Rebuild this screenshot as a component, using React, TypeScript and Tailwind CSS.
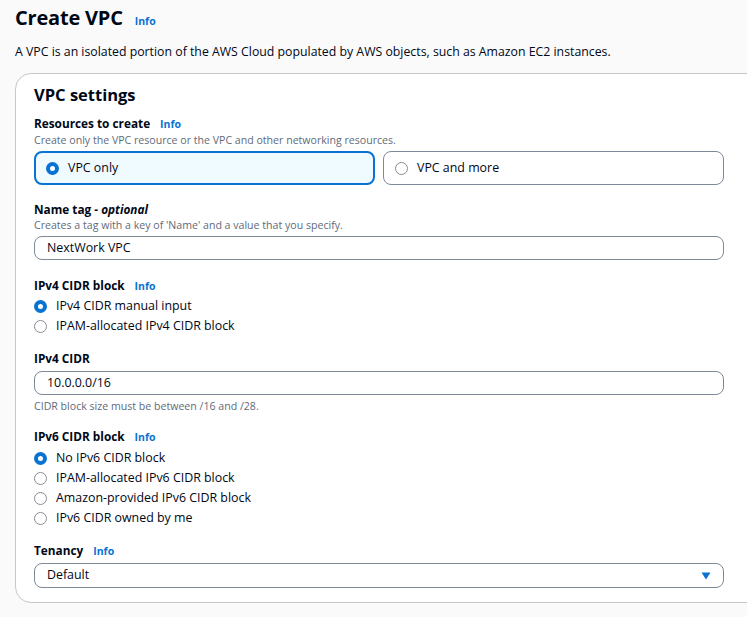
import React from "react";

const font = { fontFamily: '"Open Sans", "Noto Sans", Arial, sans-serif' };

function Info() {
  return <span className="ml-[10px] text-[10.5px] font-bold text-[#0972d3]">Info</span>;
}

function Radio({ checked }: { checked?: boolean }) {
  return checked ? (
    <span className="inline-block h-[13px] w-[13px] shrink-0 rounded-full border-[4px] border-[#0972d3] bg-white" />
  ) : (
    <span className="inline-block h-[13px] w-[13px] shrink-0 rounded-full border border-[#8c8c94] bg-white" />
  );
}

function RadioRow({ label, checked }: { label: string; checked?: boolean }) {
  return (
    <div className="flex h-[20px] items-center gap-[9px] text-[12.4px] text-[#000716]">
      <Radio checked={checked} />
      <span>{label}</span>
    </div>
  );
}

function Label({ children }: { children: React.ReactNode }) {
  return <div className="flex items-baseline text-[11.8px] font-bold leading-[18px] text-[#000716]">{children}</div>;
}

function Help({ children }: { children: React.ReactNode }) {
  return <div className="text-[10.6px] leading-[15px] text-[#5f6b7a]">{children}</div>;
}

function Input({ value }: { value: string }) {
  return (
    <div className="flex h-[24px] items-center rounded-[8px] border border-[#7d8998] bg-white px-[12px] text-[12.4px] text-[#000716]">
      {value}
    </div>
  );
}

export default function App() {
  return (
    <div className="h-[617px] w-[747px] overflow-hidden bg-[#fafafb]" style={font}>
      <div className="w-[790px] pl-[15px]">
        <div className="flex items-baseline pt-[2px]">
          <h1 className="text-[20px] font-bold leading-[32px] tracking-[-0.2px] text-[#000716]">Create VPC</h1>
          <span className="ml-[12px] text-[10.5px] font-bold text-[#0972d3]">Info</span>
        </div>
        <p className="mt-[8px] text-[12.3px] leading-[20px] text-[#000716]">
          A VPC is an isolated portion of the AWS Cloud populated by AWS objects, such as Amazon EC2 instances.
        </p>

        <div className="mt-[11px] rounded-[16px] border border-[#c6c6cd] bg-white pb-[14px] pl-[18px] pr-[18px] pt-[9px]">
          <h2 className="text-[16.5px] font-bold leading-[24px] text-[#000716]">VPC settings</h2>

          <div className="w-[690px]">
            <div className="mt-[7px]">
              <Label>
                Resources to create <Info />
              </Label>
              <Help>Create only the VPC resource or the VPC and other networking resources.</Help>
              <div className="mt-[3px] grid grid-cols-2 gap-[8px]">
                <div className="flex h-[34px] items-center gap-[9px] rounded-[8px] border-2 border-[#0972d3] bg-[#f0fbff] px-[10px] text-[12.4px] text-[#000716]">
                  <Radio checked />
                  <span>VPC only</span>
                </div>
                <div className="flex h-[34px] items-center gap-[9px] rounded-[8px] border border-[#7d8998] bg-white px-[11px] text-[12.4px] text-[#000716]">
                  <Radio />
                  <span>VPC and more</span>
                </div>
              </div>
            </div>

            <div className="mt-[15px]">
              <Label>
                Name tag -&nbsp;<i>optional</i>
              </Label>
              <Help>Creates a tag with a key of 'Name' and a value that you specify.</Help>
              <div className="mt-[3px]">
                <Input value="NextWork VPC" />
              </div>
            </div>

            <div className="mt-[16px]">
              <Label>
                IPv4 CIDR block <Info />
              </Label>
              <div className="mt-[1px]">
                <RadioRow label="IPv4 CIDR manual input" checked />
                <RadioRow label="IPAM-allocated IPv4 CIDR block" />
              </div>
            </div>

            <div className="mt-[13px]">
              <Label>IPv4 CIDR</Label>
              <div className="mt-[4px]">
                <Input value="10.0.0.0/16" />
              </div>
              <div className="mt-[4px]">
                <Help>CIDR block size must be between /16 and /28.</Help>
              </div>
            </div>

            <div className="mt-[13px]">
              <Label>
                IPv6 CIDR block <Info />
              </Label>
              <div className="mt-[2px]">
                <RadioRow label="No IPv6 CIDR block" checked />
                <RadioRow label="IPAM-allocated IPv6 CIDR block" />
                <RadioRow label="Amazon-provided IPv6 CIDR block" />
                <RadioRow label="IPv6 CIDR owned by me" />
              </div>
            </div>

            <div className="mt-[13px]">
              <Label>
                Tenancy <Info />
              </Label>
              <div className="mt-[3px] flex h-[25px] items-center justify-between rounded-[8px] border border-[#7d8998] bg-white pl-[12px] pr-[12px] text-[12.4px] text-[#000716]">
                <span>Default</span>
                <svg width="10" height="8" viewBox="0 0 10 8">
                  <path d="M0.5 0.5 H9.5 L5 7.5 Z" fill="#0972d3" />
                </svg>
              </div>
            </div>
          </div>
        </div>
      </div>
    </div>
  );
}
